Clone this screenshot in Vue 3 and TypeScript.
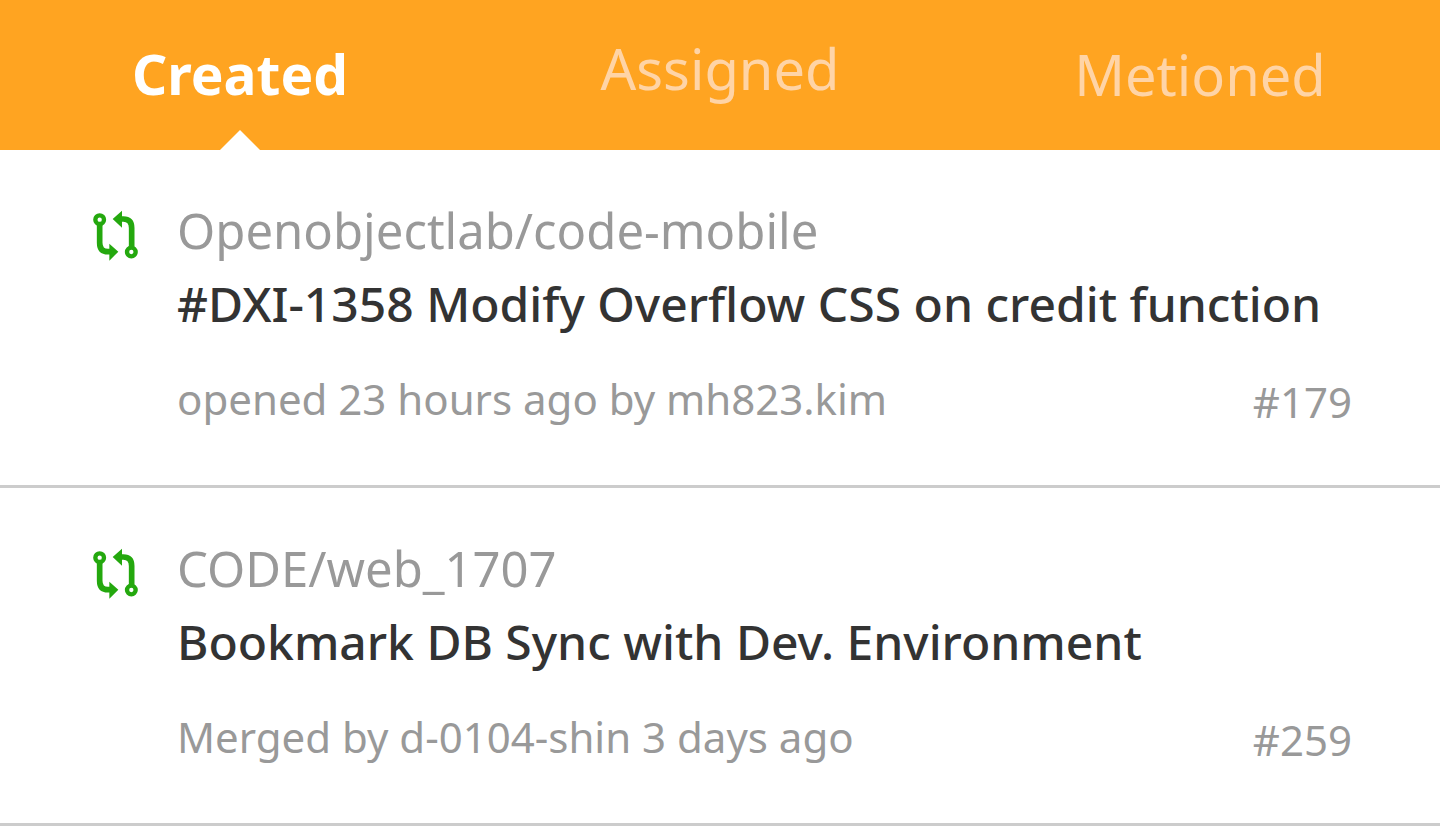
<script setup lang="ts">
import { ref } from 'vue'

interface Tab {
  id: string
  label: string
}

interface PullRequest {
  id: number
  repo: string
  title: string
  status: string
}

const tabs: Tab[] = [
  { id: 'created', label: 'Created' },
  { id: 'assigned', label: 'Assigned' },
  { id: 'mentioned', label: 'Metioned' },
]

const active = ref('created')

const requests: PullRequest[] = [
  {
    id: 179,
    repo: 'Openobjectlab/code-mobile',
    title: '#DXI-1358 Modify Overflow CSS on credit function',
    status: 'opened 23 hours ago by mh823.kim',
  },
  {
    id: 259,
    repo: 'CODE/web_1707',
    title: 'Bookmark DB Sync with Dev. Environment',
    status: 'Merged by d-0104-shin 3 days ago',
  },
]
</script>

<template>
  <div class="screen">
    <nav class="tabs">
      <button
        v-for="tab in tabs"
        :key="tab.id"
        type="button"
        class="tab"
        :class="[`tab-${tab.id}`, { active: active === tab.id }]"
        @click="active = tab.id"
      >
        {{ tab.label }}
      </button>
    </nav>
    <main>
      <article v-for="item in requests" :key="item.id" class="request">
        <svg class="icon" viewBox="36 30 141 153" aria-hidden="true">
          <g fill="none" stroke="#24a80e">
            <circle cx="59" cy="59" r="13" stroke-width="13" />
            <circle cx="154" cy="156" r="13" stroke-width="13" />
            <path d="M59 75V128Q59 155 84 155H92M122 57H130Q155 57 155 84V140" stroke-width="17" />
          </g>
          <path d="M88 131L115 155L88 182ZM126 32L98 57L126 83Z" fill="#24a80e" />
        </svg>
        <div class="body">
          <p class="repo">{{ item.repo }}</p>
          <h2 class="title">{{ item.title }}</h2>
          <div class="meta">
            <span>{{ item.status }}</span>
            <span class="number">#{{ item.id }}</span>
          </div>
        </div>
      </article>
    </main>
  </div>
</template>

<style>
body {
  margin: 0;
  background: #fff;
}
</style>

<style scoped>
.screen {
  font-family: 'Noto Sans', sans-serif;
  color: #999;
}

.tabs {
  display: grid;
  grid-template-columns: repeat(3, 1fr);
  min-height: 150px;
  background: #ffa421;
}

.tab {
  position: relative;
  padding: 0 0 2px;
  border: 0;
  background: none;
  color: #ffd4a6;
  font-family: inherit;
  font-size: 56px;
  line-height: 80px;
  cursor: pointer;
}

.tab-assigned {
  padding-bottom: 14px;
}

.tab.active {
  color: #fff;
  font-size: 55px;
  font-weight: 700;
}

.tab.active::after {
  content: '';
  position: absolute;
  bottom: 0;
  left: 50%;
  margin-left: -20px;
  border: 20px solid transparent;
  border-top: 0;
  border-bottom-color: #fff;
}

.request {
  display: flex;
  gap: 38px;
  padding: 43px 88px 53px 92px;
  border-bottom: 3px solid #ccc;
}

.icon {
  flex: none;
  width: 47px;
  height: 51px;
  margin-top: 17px;
}

.body {
  flex: 1;
  min-width: 0;
}

.repo,
.title {
  margin: 0;
  font-size: 49px;
  font-weight: 400;
  line-height: 74px;
}

.title {
  color: #333;
  font-size: 48px;
  font-weight: 500;
}

.meta {
  display: flex;
  justify-content: space-between;
  margin-top: 28px;
  font-size: 42px;
  line-height: 60px;
}

.number {
  padding-top: 3px;
}
</style>
